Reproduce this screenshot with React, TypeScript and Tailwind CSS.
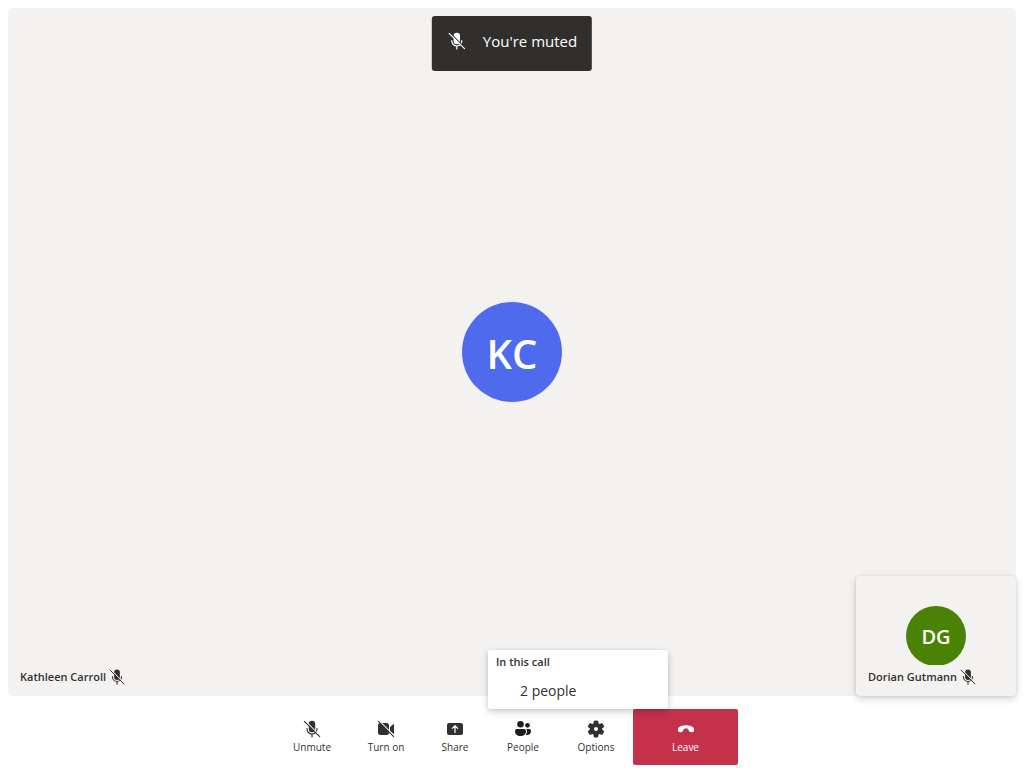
import { useId, type ReactNode } from 'react';

type IconProps = { className?: string };

function MicOffIcon({ className = 'size-5' }: IconProps) {
  const id = useId();
  return (
    <svg viewBox="0 0 20 20" className={className} fill="none" aria-hidden="true">
      <mask id={id} maskUnits="userSpaceOnUse" x="0" y="0" width="20" height="20">
        <rect width="20" height="20" fill="white" />
        <path d="M3 1.700 19 17.700" stroke="black" strokeWidth="1.1" />
      </mask>
      <g mask={`url(#${id})`}>
        <rect x="6.800" y="1.800" width="6.400" height="11.400" rx="3.200" fill="currentColor" />
        <path d="M5 9.500v.5a5 5 0 0 0 10 0v-.5M10 15v3" stroke="currentColor" strokeWidth="1.2" strokeLinecap="round" />
      </g>
      <path d="M2.300 2.300 17.700 17.700" stroke="currentColor" strokeWidth="1.1" strokeLinecap="round" />
    </svg>
  );
}

function VideoOffIcon({ className = 'size-5' }: IconProps) {
  const id = useId();
  return (
    <svg viewBox="0 0 20 20" className={className} fill="none" aria-hidden="true">
      <mask id={id} maskUnits="userSpaceOnUse" x="0" y="0" width="20" height="20">
        <rect width="20" height="20" fill="white" />
        <path d="M2.500 1.100 19 17.600" stroke="black" strokeWidth="1.2" />
      </mask>
      <g mask={`url(#${id})`} fill="currentColor">
        <rect x="2" y="4" width="11" height="12" rx="2.5" />
        <path d="m14 7.900 3.200-2.700a.5.5 0 0 1 .8.4v8.800a.5.5 0 0 1-.8.4L14 12.100Z" />
      </g>
      <path d="M2.300 2.300 17.700 17.700" stroke="currentColor" strokeWidth="1.1" strokeLinecap="round" />
    </svg>
  );
}

function ShareIcon({ className = 'size-5' }: IconProps) {
  return (
    <svg viewBox="0 0 20 20" className={className} fill="none" aria-hidden="true">
      <rect x="2" y="4" width="16" height="12" rx="2" fill="currentColor" />
      <path
        d="M10 13.500v-6.700M7.300 9.300 10 6.600 12.700 9.300"
        stroke="white"
        strokeWidth="1.2"
        strokeLinecap="round"
        strokeLinejoin="round"
      />
    </svg>
  );
}

function PeopleIcon({ className = 'size-5' }: IconProps) {
  return (
    <svg viewBox="0 0 20 20" className={className} fill="currentColor" aria-hidden="true">
      <circle cx="7.500" cy="5.300" r="3.300" />
      <circle cx="14.500" cy="6.300" r="2.400" />
      <path d="M4 10h7a2 2 0 0 1 2 2c0 3.300-2.200 5-5.500 5S2 15.300 2 12a2 2 0 0 1 2-2Z" />
      <path d="M13.200 10H16.200a1.800 1.800 0 0 1 1.800 1.800c0 2.900-1.500 4.200-4.200 4.200-.4 0-.8 0-1.200-.1.900-1 1.400-2.300 1.400-3.900 0-.8-.3-1.500-.8-2Z" />
    </svg>
  );
}

function SettingsIcon({ className = 'size-5' }: IconProps) {
  return (
    <svg viewBox="0 0 20 20" className={className} fill="currentColor" aria-hidden="true">
      <path
        fillRule="evenodd"
        d="M1.910 7.380A8.500 8.500 0 0 1 3.690 4.300a.5.5 0 0 1 .54-.13l1.920.68a1 1 0 0 0 1.320-.76l.36-2a.5.5 0 0 1 .4-.4 8.530 8.530 0 0 1 3.550 0c.2.04.35.2.38.4l.37 2a1 1 0 0 0 1.320.76l1.920-.68a.5.5 0 0 1 .54.13 8.500 8.500 0 0 1 1.780 3.080c.06.2 0 .4-.15.54l-1.560 1.320a1 1 0 0 0 0 1.520l1.560 1.320a.5.5 0 0 1 .15.54 8.500 8.500 0 0 1-1.780 3.080.5.5 0 0 1-.54.13l-1.920-.68a1 1 0 0 0-1.320.76l-.37 2a.5.5 0 0 1-.38.4 8.530 8.530 0 0 1-3.560 0 .5.5 0 0 1-.39-.4l-.36-2a1 1 0 0 0-1.320-.76l-1.920.68a.5.5 0 0 1-.54-.13 8.500 8.500 0 0 1-1.780-3.080.5.5 0 0 1 .15-.54l1.560-1.320a1 1 0 0 0 0-1.520L2.060 7.920a.5.5 0 0 1-.15-.54ZM8 10a2 2 0 1 0 4 0 2 2 0 0 0-4 0Z"
      />
    </svg>
  );
}

function CallEndIcon({ className = 'size-5' }: IconProps) {
  return (
    <svg viewBox="0 0 20 20" className={className} fill="currentColor" aria-hidden="true">
      <path d="M18 11.100l-.2.900c-.2.800-1 1.300-1.900 1.200l-1.700-.3c-.7-.1-1.300-.6-1.500-1.300l-.5-1.700c-.7-.3-1.500-.4-2.300-.4s-1.500.1-2.200.4l-.4 1.700c-.2.700-.7 1.200-1.500 1.300l-1.700.3c-.8.1-1.600-.4-1.900-1.200L2 11.100c-.2-.9 0-1.800.7-2.500C4.300 7 6.800 6.200 10 6.200s5.700.8 7.300 2.400c.7.700.9 1.600.7 2.500Z" />
    </svg>
  );
}

function NameLabel({ name }: { name: string }) {
  return (
    <div className="flex items-center gap-0.5 bg-[#f3f2f1] px-1 text-[11px] leading-6 font-semibold text-[#323130]">
      <span className="whitespace-nowrap">{name}</span>
      <MicOffIcon className="size-[18px]" />
    </div>
  );
}

type ControlProps = { label: string; icon: ReactNode; className: string };

function ControlButton({ label, icon, className }: ControlProps) {
  return (
    <button
      type="button"
      className={`flex h-14 shrink-0 flex-col items-center justify-center rounded-xs text-[10px] leading-4 whitespace-nowrap ${className}`}
    >
      {icon}
      <span>{label}</span>
    </button>
  );
}

export default function App() {
  return (
    <div className="flex min-h-screen flex-col bg-white px-2 pt-2 font-['Open_Sans','Liberation_Sans',sans-serif] text-[#323130]">
      <main className="relative flex flex-1 items-center justify-center rounded bg-[#f3f2f1]">
        <div
          role="status"
          className="absolute top-2 left-1/2 flex -translate-x-1/2 items-center gap-4 rounded-[3px] bg-[#302f2e] px-[15px] pt-[13px] pb-[18px] text-[15px] leading-6 whitespace-nowrap text-white"
        >
          <MicOffIcon />
          <span>You're muted</span>
        </div>

        <div className="flex size-[100px] items-center justify-center rounded-full bg-[#4f6bed] pt-1 text-[40px] leading-none font-semibold text-white">
          KC
        </div>

        <div className="absolute bottom-[7px] left-2">
          <NameLabel name="Kathleen Carroll" />
        </div>

        <section
          aria-label="Dorian Gutmann"
          className="absolute right-0 bottom-0 flex h-30 w-40 items-center justify-center rounded bg-[#f3f2f1] shadow-[0_1px_4px_rgba(0,0,0,0.12),0_3px_8px_rgba(0,0,0,0.13)]"
        >
          <div className="flex size-15 items-center justify-center rounded-full bg-[#498205] pt-0.5 text-[20px] leading-none font-semibold text-white">
            DG
          </div>
          <div className="absolute bottom-[7px] left-2">
            <NameLabel name="Dorian Gutmann" />
          </div>
        </section>
      </main>

      <footer className="flex h-[72px] items-start justify-center pt-[13px]">
        <div className="flex gap-6">
          <ControlButton label="Unmute" icon={<MicOffIcon />} className="w-[52px]" />
          <ControlButton label="Turn on" icon={<VideoOffIcon />} className="w-12" />
          <ControlButton label="Share" icon={<ShareIcon />} className="w-[42px]" />
          <div className="relative">
            <ControlButton label="People" icon={<PeopleIcon />} className="w-[46px] [&>svg]:text-[#201f1e]" />
            <div
              role="menu"
              aria-label="In this call"
              className="absolute bottom-full -left-3 w-[180px] rounded-xs bg-white shadow-[0_1px_4px_rgba(0,0,0,0.12),0_3px_8px_rgba(0,0,0,0.14)]"
            >
              <div className="px-2 text-[11px] leading-6 font-semibold">In this call</div>
              <button type="button" role="menuitem" className="block h-[35px] w-full pb-0.5 pl-8 text-left text-[14px]">
                2 people
              </button>
            </div>
          </div>
          <ControlButton label="Options" icon={<SettingsIcon />} className="w-[52px]" />
        </div>
        <ControlButton label="Leave" icon={<CallEndIcon />} className="ml-[11px] w-[105px] bg-[#c4314b] text-white" />
      </footer>
    </div>
  );
}
